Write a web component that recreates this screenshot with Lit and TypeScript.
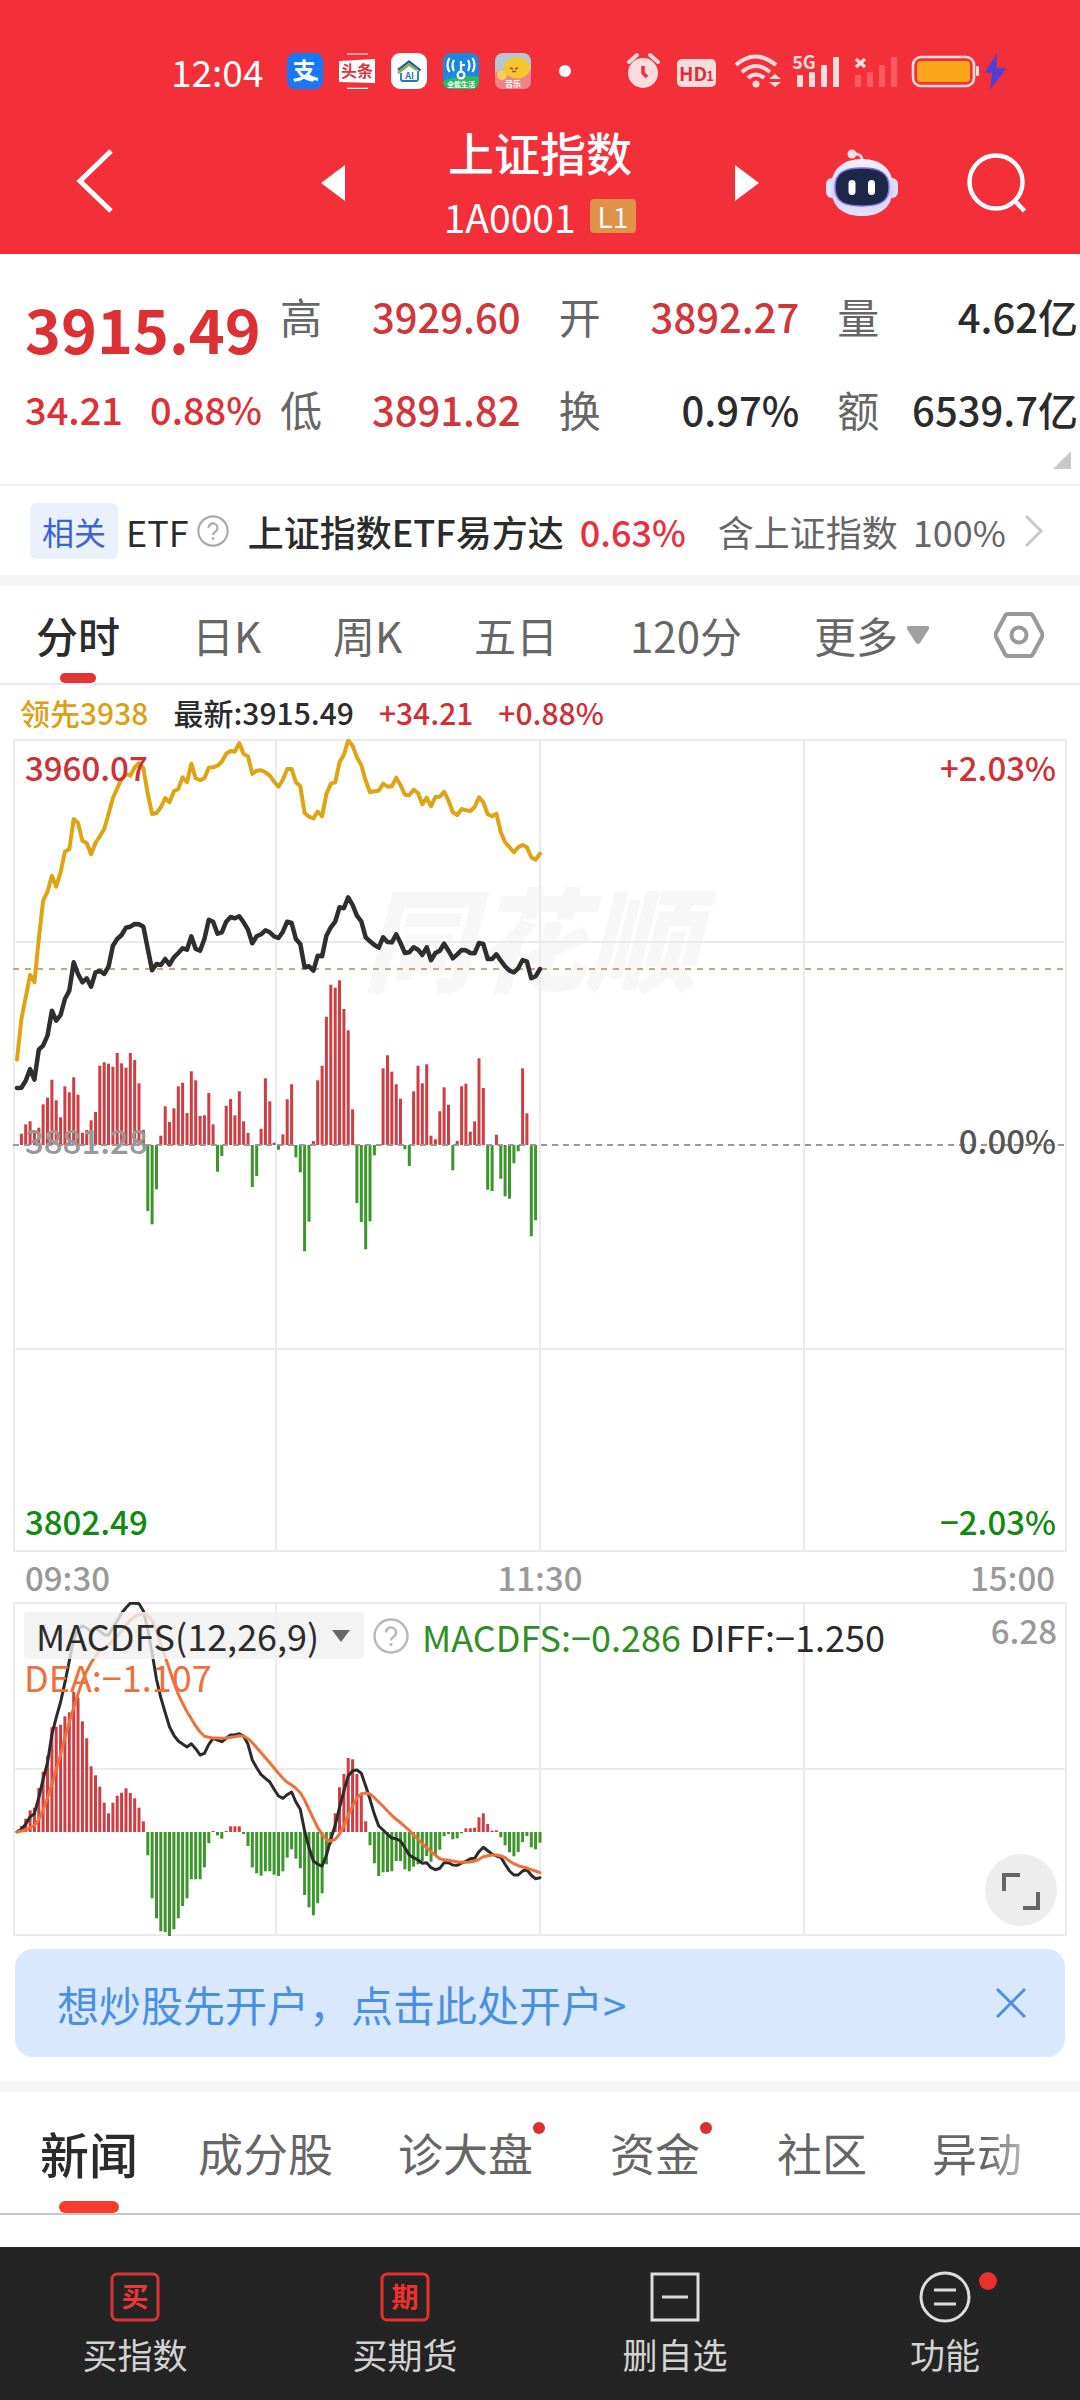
import { LitElement, html, svg, css } from "lit";
import { customElement, state } from "lit/decorators.js";
import { classMap } from "lit/directives/class-map.js";

/* One value per minute of the morning session, 09:30 to 11:30.
   Levels are in thirds of a plot unit, growing downwards. */
const LEAD = [
  1082, 960, 895, 828, 850, 720, 605, 578, 530, 563, 520, 458, 450, 360, 372, 425, 432, 466, 432, 412, 390, 345, 297, 268,
  240, 225, 230, 205, 192, 208, 285, 345, 342, 325, 297, 310, 277, 270, 235, 250, 194, 238, 244, 238, 206, 205, 200, 188,
  164, 156, 158, 132, 165, 172, 225, 215, 214, 220, 230, 248, 263, 242, 210, 210, 250, 262, 342, 353, 358, 338, 352, 285,
  254, 250, 190, 167, 124, 140, 175, 198, 245, 280, 277, 275, 254, 263, 262, 236, 258, 287, 289, 272, 282, 316, 296, 322,
  294, 293, 278, 305, 340, 348, 330, 334, 336, 324, 295, 310, 346, 352, 344, 400, 430, 445, 460, 445, 438, 445, 475, 482,
  464,
];
const PRICE = [
  1167, 1166, 1145, 1110, 1142, 1052, 1040, 1010, 935, 965, 948, 900, 875, 790, 825, 850, 838, 863, 820, 816, 825, 803,
  740, 720, 708, 686, 683, 675, 676, 683, 750, 814, 795, 798, 780, 797, 775, 762, 748, 752, 712, 750, 755, 720, 662, 668,
  704, 700, 668, 654, 658, 652, 670, 692, 733, 712, 706, 694, 700, 712, 717, 698, 668, 672, 720, 735, 805, 802, 815, 770,
  772, 710, 685, 668, 625, 628, 595, 618, 650, 667, 715, 727, 738, 746, 715, 729, 730, 706, 732, 762, 760, 745, 752, 768,
  745, 784, 762, 755, 734, 755, 778, 766, 753, 754, 762, 763, 732, 735, 780, 780, 766, 785, 802, 815, 820, 808, 783, 788,
  838, 832, 810,
];
const FORCE = [
  0, 34, 62, 71, 37, 52, 122, 142, 196, 134, 83, 176, 158, 203, 151, 37, 45, 74, 99, 238, 248, 244, 235, 276, 245, 232,
  276, 255, 185, 45, -198, -238, -133, 28, 116, 69, 110, 176, 187, 96, 221, 194, 87, 89, 156, 62, -80, -33, 118, 138, 89,
  161, 71, 36, -126, -93, 49, 200, 131, 7, -14, 32, 137, 182, -37, -82, -319, -230, 12, 194, 238, 385, 481, 472, 494, 408,
  344, 107, -174, -231, -313, -229, -31, -2, 230, 269, 220, 182, 139, -13, -63, 161, 238, 185, 242, 28, 17, 101, 173, 121,
  -76, 12, 176, 184, 40, 71, 260, 171, -134, -138, 31, -101, -154, -161, -55, -19, 230, 95, -274, -226, 0,
];
const MACD = [
  0, 18, 40, 65, 73, 132, 181, 228, 314, 316, 322, 347, 359, 420, 403, 332, 281, 197, 170, 136, 88, 56, 88, 109, 118, 131,
  117, 101, 73, 32, -70, -199, -259, -298, -300, -312, -292, -259, -222, -199, -142, -142, -142, -106, -33, 3, -10, -20, 3,
  17, 17, 17, -6, -42, -106, -124, -131, -118, -118, -128, -132, -118, -77, -52, -80, -109, -189, -226, -250, -214, -184,
  -97, -37, 56, 134, 174, 222, 218, 174, 113, 32, -40, -94, -132, -121, -120, -118, -87, -87, -112, -118, -104, -97, -87,
  -72, -89, -70, -53, -13, -6, -22, -19, -4, 11, 11, 13, 44, 56, 24, 4, 5, -16, -40, -61, -73, -60, -30, -12, -46, -52,
  -32,
];
const DIFF = [
  1057, 1050, 1035, 1012, 1003, 955, 900, 850, 765, 715, 668, 610, 545, 480, 450, 440, 446, 458, 448, 455, 466, 468, 445,
  425, 402, 385, 372, 372, 373, 395, 450, 520, 600, 655, 700, 742, 768, 785, 794, 803, 793, 808, 827, 822, 795, 777, 782,
  787, 777, 767, 767, 763, 770, 795, 842, 865, 886, 897, 908, 930, 950, 957, 946, 938, 968, 990, 1055, 1105, 1145, 1155,
  1160, 1128, 1080, 1038, 985, 935, 890, 874, 872, 882, 920, 960, 1005, 1040, 1052, 1065, 1076, 1078, 1085, 1105, 1127,
  1135, 1142, 1152, 1150, 1165, 1171, 1167, 1150, 1150, 1157, 1158, 1151, 1146, 1138, 1137, 1117, 1104, 1114, 1124, 1130,
  1134, 1155, 1175, 1187, 1187, 1175, 1171, 1188, 1198, 1195,
];
const DEA = [
  1058, 1055, 1052, 1045, 1038, 1020, 992, 955, 915, 870, 825, 775, 728, 685, 645, 605, 575, 550, 530, 515, 505, 497, 483,
  470, 455, 438, 422, 412, 406, 403, 408, 425, 455, 495, 533, 570, 610, 645, 672, 697, 718, 740, 758, 771, 774, 776, 776,
  777, 776, 774, 772, 769, 770, 778, 790, 805, 820, 835, 850, 866, 882, 897, 909, 917, 927, 940, 962, 990, 1018, 1045,
  1065, 1080, 1085, 1080, 1064, 1038, 1008, 980, 957, 943, 941, 944, 955, 968, 981, 995, 1008, 1020, 1030, 1042, 1053,
  1067, 1080, 1093, 1105, 1117, 1128, 1138, 1141, 1143, 1145, 1147, 1149, 1149, 1148, 1145, 1140, 1132, 1129, 1127, 1127,
  1130, 1135, 1145, 1153, 1159, 1163, 1166, 1171, 1175, 1180,
];

const minuteX = (i: number) => 4 + (i * 523) / 120;
const line = (levels: number[], top: number) =>
  levels.map((v, i) => `${minuteX(i).toFixed(1)},${((v - top) / 3).toFixed(1)}`).join(" ");
const bars = (values: number[], zero: number) =>
  values.map((v, i) =>
    v === 0
      ? null
      : svg`<rect x=${(minuteX(i) - 1.5).toFixed(1)} y=${(v > 0 ? zero - v / 3 : zero).toFixed(1)} width="3"
          height=${(Math.abs(v) / 3).toFixed(1)} fill=${v > 0 ? "#cf3e42" : "#3c962c"}></rect>`
  );

const helpIcon = html`<svg class="help" viewBox="0 0 36 36" aria-hidden="true">
  <circle cx="18" cy="18" r="16.5" fill="none" stroke="currentColor" stroke-width="2.4"></circle>
  <path d="M13 14.5a5 5 0 1 1 7.6 4.2c-1.8 1.1-2.6 1.9-2.6 3.8" fill="none" stroke="currentColor" stroke-width="2.4"></path>
  <circle cx="18" cy="26.5" r="1.6" fill="currentColor"></circle>
</svg>`;

@customElement("status-bar")
class StatusBar extends LitElement {
  static styles = css`
    :host {
      display: flex;
      align-items: center;
      justify-content: space-between;
      height: 118px;
      padding: 24px 74px 0 171px;
      box-sizing: border-box;
      color: #fff;
    }
    .group {
      display: flex;
      align-items: center;
      gap: 16px;
    }
    .time {
      font-size: 37px;
      line-height: 40px;
      margin-right: 8px;
    }
    .app {
      width: 36px;
      height: 36px;
    }
    .dot {
      width: 12px;
      height: 12px;
      border-radius: 50%;
      background: #fff;
      margin-left: 12px;
    }
    .system {
      color: #ffdcdc;
    }
    svg {
      display: block;
      overflow: visible;
    }
    text {
      font-family: "Noto Sans CJK SC", sans-serif;
      font-weight: 700;
      text-anchor: middle;
    }
  `;
  render() {
    return html`
      <div class="group">
        <span class="time">12:04</span>
        <svg class="app" viewBox="0 0 36 36">
          <rect width="36" height="36" rx="8" fill="#1678fb"></rect>
          <text x="17" y="26" font-size="23" fill="#fff">支</text>
          <path d="M20 22c4 3 8 4 11 4.500" stroke="#fff" stroke-width="3" fill="none"></path>
        </svg>
        <svg class="app" viewBox="0 0 36 36">
          <rect width="36" height="36" rx="8" fill="#f0303a"></rect>
          <path d="M8 1h21M8 35.400h21" stroke="#fff" stroke-width="1.200"></path>
          <path d="M0 8l36-2v24L0 29z" fill="#fff"></path>
          <text x="18" y="24" font-size="16" fill="#d9353b">头条</text>
        </svg>
        <svg class="app" viewBox="0 0 36 36">
          <rect width="36" height="36" rx="9" fill="#fff"></rect>
          <path d="M7 17L18 8.500 29.500 17.500" fill="none" stroke="#2a5d9c" stroke-width="2.500"></path>
          <path d="M7 20L18 11.500 26 17" fill="none" stroke="#7fb548" stroke-width="2.500"></path>
          <path d="M10 20v6q0 2 2 2h13q2 0 2-2v-8" fill="none" stroke="#2578b8" stroke-width="1.800"></path>
          <text x="18.500" y="25.500" font-size="9" fill="#2578b8">AI</text>
        </svg>
        <svg class="app" viewBox="0 0 36 36">
          <rect width="36" height="36" rx="8" fill="#1c86e0"></rect>
          <path d="M0 28q18-7 36-4v4q0 8-8 8H8q-8 0-8-8z" fill="#2dba62"></path>
          <g fill="none" stroke="#fff" stroke-width="2.200">
            <path d="M11 7q-3 5 0 11M6.500 5q-4 7 0 14M25 7q3 5 0 11M29.500 5q4 7 0 14M18 8v11M18 12h4"></path>
            <circle cx="18" cy="22" r="3.400"></circle>
          </g>
          <text x="18" y="34" font-size="7" fill="#fff">全能生活</text>
        </svg>
        <svg class="app" viewBox="0 0 36 36">
          <rect width="36" height="36" rx="8" fill="#b9c6cf"></rect>
          <path d="M0 20q10-8 36-2v10q0 8-8 8H8q-8 0-8-8z" fill="#f0828a"></path>
          <circle cx="7" cy="22" r="5" fill="#f2d060"></circle>
          <ellipse cx="22" cy="15" rx="13" ry="10.500" fill="#f6c62b"></ellipse>
          <path d="M15 15l3 1M23 15l-3 1M17 18.500h4" stroke="#b0462c" stroke-width="1.600"></path>
          <text x="18" y="34" font-size="8" fill="#fff">音乐</text>
        </svg>
        <span class="dot"></span>
      </div>
      <svg class="system" width="380" height="36" viewBox="0 0 380 36" role="img" aria-label="系统状态">
        <g fill="currentColor">
          <circle cx="17" cy="20" r="15"></circle>
          <path d="M3 9L11 2M24 2l8 7" stroke="currentColor" stroke-width="4" stroke-linecap="round"></path>
          <path d="M17 13v7l4 4" stroke="#f22f3a" stroke-width="3.500" fill="none"></path>
          <rect x="51" y="6" width="39" height="28" rx="5"></rect>
        </g>
        <text x="67" y="28" font-size="19" fill="#d9303a">HD</text>
        <text x="84" y="28" font-size="13" fill="#d9303a">1</text>
        <g fill="none" stroke="currentColor" stroke-width="4">
          <path d="M110 12q19-17 40 0M116 19q14-12 28 0M122 25q8-7 16 0"></path>
        </g>
        <circle cx="130" cy="31" r="3.500" fill="currentColor"></circle>
        <path d="M143 26l6-5 6 5zM143 29l6 5 6-5z" fill="currentColor"></path>
        <text x="178" y="16" font-size="18" fill="currentColor">5G</text>
        <g fill="currentColor">
          <rect x="171" y="22" width="6" height="12" rx="1"></rect>
          <rect x="183" y="19" width="6" height="15" rx="1"></rect>
          <rect x="195" y="12" width="6" height="22" rx="1"></rect>
          <rect x="207" y="4" width="6" height="30" rx="1"></rect>
        </g>
        <path d="M230 6l9 8M239 6l-9 8" stroke="currentColor" stroke-width="3.500"></path>
        <g fill="#fa5a60">
          <rect x="229" y="22" width="6" height="12" rx="1"></rect>
          <rect x="241" y="19" width="6" height="15" rx="1"></rect>
          <rect x="253" y="12" width="6" height="22" rx="1"></rect>
          <rect x="265" y="4" width="6" height="30" rx="1"></rect>
        </g>
        <rect x="287" y="4" width="61" height="29" rx="8" fill="none" stroke="currentColor" stroke-width="2.600"></rect>
        <rect x="291" y="8" width="53" height="21" rx="4" fill="#fba51a"></rect>
        <rect x="350" y="13" width="3" height="10" rx="1" fill="currentColor"></rect>
        <path d="M370 3l-10 16h7l-2 15 14-18h-9z" fill="#5040d8" stroke="#5040d8" stroke-width="1.500"></path>
      </svg>
    `;
  }
}

@customElement("intraday-chart")
class IntradayChart extends LitElement {
  static styles = css`
    :host {
      display: block;
      padding: 0 13px;
      font-size: 33px;
      line-height: 34px;
      font-weight: 500;
    }
    .legend {
      display: flex;
      gap: 25px;
      padding: 0 7px;
      font-size: 30px;
      line-height: 54px;
      color: #2b2b2b;
    }
    .lead {
      color: #dca014;
    }
    .up {
      color: #cf3036;
    }
    .down {
      color: #118a11;
    }
    .plot {
      display: grid;
      overflow: hidden;
    }
    .plot > * {
      grid-area: 1 / 1;
    }
    .price {
      aspect-ratio: 1054 / 813;
    }
    .macd {
      aspect-ratio: 1054 / 334;
    }
    svg.canvas {
      display: block;
      width: 100%;
      height: 100%;
    }
    .labels {
      display: grid;
      grid-template-columns: auto auto;
      align-content: space-between;
      justify-content: space-between;
      padding: 11px 11px 14px 12px;
      z-index: 1;
    }
    .right {
      text-align: right;
    }
    .muted,
    .axis {
      color: #999;
    }
    .mid {
      color: #555;
    }
    .base {
      padding-bottom: 8px;
    }
    .axis {
      display: grid;
      grid-template-columns: 1fr auto 1fr;
      padding: 0 12px;
      line-height: 50px;
    }
    .readout {
      display: flex;
      flex-wrap: wrap;
      align-content: flex-start;
      align-items: center;
      column-gap: 9px;
      padding: 10px 120px 0 11px;
      color: #2b2b2b;
      font-size: 36px;
      font-weight: 400;
      z-index: 1;
    }
    .picker {
      display: grid;
      align-items: center;
      background: rgba(240, 240, 240, 0.8);
      border-radius: 4px;
      color: #666;
    }
    .picker > * {
      grid-area: 1 / 1;
    }
    .picker .caret {
      justify-self: end;
      margin-right: 13px;
      width: 20px;
      height: 14px;
      pointer-events: none;
    }
    select {
      appearance: none;
      border: 0;
      background: none;
      font: inherit;
      line-height: 47px;
      color: #2b2b2b;
      height: 47px;
      padding: 0 44px 0 12px;
    }
    button {
      border: 0;
      background: none;
      padding: 0;
      font: inherit;
      display: block;
    }
    .help {
      width: 36px;
      height: 36px;
      display: block;
      color: #b8b8b8;
      margin-right: 4px;
    }
    .dfs {
      color: #2f8f25;
    }
    .dea {
      color: #f0703c;
    }
    .side {
      display: flex;
      flex-direction: column;
      justify-content: space-between;
      align-items: flex-end;
      justify-self: end;
      padding: 11px 10px 10px 0;
      z-index: 1;
    }
    .expand {
      width: 72px;
      height: 72px;
      border-radius: 50%;
      background: #ededed;
    }
    .expand svg {
      display: block;
      width: 72px;
      height: 72px;
    }
    .mark {
      font-family: "Noto Sans CJK SC", sans-serif;
      font-weight: 900;
      font-size: 112px;
      font-style: italic;
    }
  `;
  render() {
    return html`
      <div class="legend">
        <span class="lead">领先3938</span><span>最新:3915.49</span><span class="up">+34.21</span
        ><span class="up">+0.88%</span>
      </div>
      <div class="plot price">
        <svg class="canvas" viewBox="0 0 1054 813">
          <text class="mark" x="517" y="244" text-anchor="middle" fill="#f7f7f7">同花顺</text>
          <g fill="none" stroke="#ebebeb" stroke-width="2">
            <rect x="1" y="1" width="1052" height="811"></rect>
            <path d="M263 0v813M527 0v813M791 0v813M0 203h1054M0 610h1054"></path>
          </g>
          ${bars(FORCE, 406)}
          <path d="M0 406h1054" stroke="#999" stroke-width="2" stroke-dasharray="6 5"></path>
          <path d="M0 230h1054" stroke="#bdae78" stroke-width="2" stroke-dasharray="6 6"></path>
          <g fill="none" stroke-linejoin="round" stroke-linecap="round">
            <polyline points=${line(LEAD, 120)} stroke="#dfa414" stroke-width="4"></polyline>
            <polyline points=${line(PRICE, 120)} stroke="#2e2e2e" stroke-width="4.5"></polyline>
          </g>
        </svg>
        <div class="labels">
          <span class="up">3960.07</span><span class="up right">+2.03%</span>
          <span class="muted base">3881.28</span><span class="mid base right">0.00%</span>
          <span class="down">3802.49</span><span class="down right">−2.03%</span>
        </div>
      </div>
      <div class="axis"><span>09:30</span><span>11:30</span><span class="right">15:00</span></div>
      <div class="plot macd">
        <svg class="canvas" viewBox="0 0 1054 334">
          <g fill="none" stroke="#ebebeb" stroke-width="2">
            <rect x="1" y="1" width="1052" height="332"></rect>
            <path d="M263 0v334M527 0v334M791 0v334M0 167h1054"></path>
          </g>
          ${bars(MACD, 230)}
          <g fill="none" stroke-linejoin="round" stroke-linecap="round" stroke-width="3">
            <polyline points=${line(DIFF, 368)} stroke="#2b2b2b"></polyline>
            <polyline points=${line(DEA, 368)} stroke="#f0703c"></polyline>
          </g>
        </svg>
        <div class="readout">
          <span class="picker">
            <select aria-label="指标">
              <option>MACDFS(12,26,9)</option>
            </select>
            <svg class="caret" viewBox="0 0 20 14"><path d="M1 1h18L10 13z" fill="currentColor"></path></svg>
          </span>
          <button aria-label="指标说明">${helpIcon}</button>
          <span class="dfs">MACDFS:−0.286</span>
          <span>DIFF:−1.250</span>
          <span class="dea">DEA:−1.107</span>
        </div>
        <div class="side">
          <span class="muted">6.28</span>
          <button class="expand" aria-label="全屏">
            <svg viewBox="0 0 72 72" fill="none" stroke="#666" stroke-width="4">
              <path d="M19 37V21h16M38 54h15V38"></path>
            </svg>
          </button>
        </div>
      </div>
    `;
  }
}

@customElement("app-root")
class AppRoot extends LitElement {
  @state() private period = "分时";
  @state() private feed = "新闻";

  static styles = css`
    :host {
      display: flex;
      flex-direction: column;
      min-height: 100vh;
      background: #fff;
      color: #2b2b2b;
      font-family: "Noto Sans CJK SC", "Noto Sans", sans-serif;
    }
    button {
      border: 0;
      background: none;
      padding: 0;
      margin: 0;
      font: inherit;
      color: inherit;
      white-space: nowrap;
    }
    a {
      color: inherit;
      text-decoration: none;
    }
    svg {
      display: block;
    }
    .top {
      background: #f32f39;
      color: #fff;
    }
    .titlebar {
      display: grid;
      grid-template-columns: 1fr auto 1fr;
      align-items: center;
      padding: 0 52px 6px;
    }
    .back {
      padding-left: 21px;
    }
    .switcher {
      display: flex;
      align-items: center;
    }
    .name {
      min-width: 390px;
      text-align: center;
    }
    h1 {
      margin: 0;
      font-size: 46px;
      line-height: 66px;
      font-weight: 500;
    }
    .code {
      display: flex;
      align-items: center;
      justify-content: center;
      gap: 14px;
      font-size: 39px;
      line-height: 64px;
    }
    .level {
      background: #e0914a;
      border-radius: 4px;
      font-size: 28px;
      line-height: 34px;
      padding: 0 8px;
    }
    .actions {
      display: flex;
      align-items: center;
      justify-content: flex-end;
      gap: 67px;
    }
    .quote {
      position: relative;
      display: flex;
      padding: 32px 2px 45px 25px;
      border-bottom: 2px solid #f0f0f0;
      font-weight: 500;
    }
    .last {
      flex: none;
      width: 255px;
      color: #dc3034;
    }
    .last strong {
      display: block;
      font-size: 61px;
      line-height: 84px;
      font-weight: 700;
      margin-bottom: 9px;
    }
    .change {
      display: flex;
      gap: 27px;
      font-size: 38px;
      line-height: 60px;
    }
    .stats {
      flex: 1;
      margin: 0;
      display: grid;
      grid-template-columns: repeat(3, 1fr);
      gap: 33px 38px;
      font-size: 40px;
      line-height: 60px;
    }
    .stat {
      display: flex;
      justify-content: space-between;
      white-space: nowrap;
    }
    dt {
      color: #666;
      font-size: 42px;
      font-weight: 400;
    }
    dd {
      margin: 0;
    }
    .rise {
      color: #d2353a;
    }
    .corner {
      position: absolute;
      right: 9px;
      bottom: 15px;
    }
    .etf {
      display: flex;
      align-items: center;
      height: 89px;
      padding: 0 36px 0 30px;
      border-bottom: 11px solid #f5f5f5;
      font-size: 36px;
      line-height: 48px;
      white-space: nowrap;
    }
    .tag {
      background: #eaf0fc;
      color: #3a63d8;
      border-radius: 6px;
      font-size: 32px;
      line-height: 56px;
      padding: 0 12px;
      margin-right: 8px;
    }
    .help {
      width: 32px;
      height: 32px;
      color: #aaa;
      margin: 0 19px 0 8px;
    }
    .fund {
      font-weight: 500;
    }
    .gain {
      color: #e8303e;
      margin: 0 32px 0 16px;
      font-weight: 500;
    }
    .holding {
      color: #666;
      display: flex;
      flex: 1;
      gap: 15px;
    }
    .periods {
      display: flex;
      align-items: center;
      gap: 64px;
      height: 97px;
      padding: 0 36px;
      border-bottom: 2px solid #ebebeb;
      font-size: 42px;
      color: #666;
    }
    .tabs {
      flex: 1;
      align-self: stretch;
      display: flex;
      justify-content: space-between;
    }
    .tab {
      position: relative;
      align-self: stretch;
      display: flex;
      align-items: center;
      gap: 8px;
    }
    .active {
      color: #2b2b2b;
      font-weight: 500;
    }
    .active::after {
      content: "";
      position: absolute;
      left: 50%;
      bottom: 0;
      width: 36px;
      height: 10px;
      margin-left: -18px;
      border-radius: 5px;
      background: #e23434;
    }
    .banner {
      display: flex;
      align-items: center;
      justify-content: space-between;
      margin: 13px 15px 24px;
      height: 108px;
      padding: 0 39px 0 42px;
      border-radius: 18px;
      background: #dae8fe;
      color: #4a8fe0;
      font-size: 42px;
    }
    .feeds {
      display: flex;
      gap: 65px;
      height: 121px;
      padding: 0 50px 0 40px;
      border-top: 11px solid #f5f5f5;
      border-bottom: 2px solid #c8c8c8;
      font-size: 45px;
      color: #666;
      overflow: hidden;
    }
    .feeds .tab {
      flex: none;
    }
    .feeds .active {
      font-size: 49px;
      margin-right: -5px;
    }
    .feeds .active::after {
      width: 60px;
      height: 12px;
      margin-left: -30px;
      border-radius: 6px;
      background: #fb3b2e;
    }
    .fresh {
      margin-right: 12px;
    }
    .fresh::after {
      content: "";
      position: absolute;
      right: -12px;
      top: 30px;
      width: 12px;
      height: 12px;
      border-radius: 50%;
      background: #d93030;
    }
    .feeds .tab:last-child {
      background: linear-gradient(90deg, #666 60%, #b8b8b8);
      background-clip: text;
      -webkit-background-clip: text;
      color: transparent;
    }
    .trade {
      margin-top: auto;
      display: grid;
      grid-template-columns: repeat(4, 1fr);
      background: #242424;
      color: #d2d2d2;
      padding: 25px 0 20px;
      font-size: 35px;
      line-height: 52px;
    }
    .trade button {
      display: flex;
      flex-direction: column;
      align-items: center;
      gap: 6px;
    }
    .trade svg {
      overflow: visible;
    }
    .glyph {
      font-size: 27px;
      font-weight: 700;
      text-anchor: middle;
    }
  `;

  private stat(label: string, value: string, rise = false) {
    return html`<div class="stat">
      <dt>${label}</dt>
      <dd class=${rise ? "rise" : ""}>${value}</dd>
    </div>`;
  }

  render() {
    const fresh = ["诊大盘", "资金"];
    return html`
      <header class="top">
        <status-bar></status-bar>
        <div class="titlebar">
          <div class="back">
            <button aria-label="返回">
              <svg width="44" height="66" viewBox="0 0 44 66" fill="none" stroke="#fff" stroke-width="5">
                <path d="M38 3L7 33l31 30"></path>
              </svg>
            </button>
          </div>
          <div class="switcher">
            <button aria-label="上一个"><svg width="24" height="36"><path d="M24 0v36L0 18z" fill="#fff"></path></svg></button>
            <div class="name">
              <h1>上证指数</h1>
              <div class="code"><span>1A0001</span><span class="level">L1</span></div>
            </div>
            <button aria-label="下一个"><svg width="24" height="36"><path d="M0 0v36L24 18z" fill="#fff"></path></svg></button>
          </div>
          <div class="actions">
            <button aria-label="智能助手">
              <svg width="74" height="68" viewBox="0 0 74 68">
                <defs>
                  <linearGradient id="shell" x1="0" y1="0" x2="0" y2="1">
                    <stop offset="0" stop-color="#f6f2fb"></stop>
                    <stop offset=".6" stop-color="#d4cff6"></stop>
                    <stop offset="1" stop-color="#e6e2fb"></stop>
                  </linearGradient>
                </defs>
                <path d="M28 5q10-1 9 8" fill="none" stroke="#f3d7e2" stroke-width="3"></path>
                <circle cx="27" cy="5" r="4.500" fill="#fbdde4"></circle>
                <rect x="1" y="29" width="12" height="20" rx="6" fill="#e6e2f8"></rect>
                <rect x="61" y="29" width="12" height="20" rx="6" fill="#dcdcf6"></rect>
                <path d="M37 10c20 0 31 11 31 28 0 19-11 29-31 29S6 57 6 38C6 21 17 10 37 10z" fill="url(#shell)"></path>
                <path
                  d="M37 19c18 0 27 5 27 19 0 14-8 19-27 19s-27-5-27-19c0-14 9-19 27-19z"
                  fill="#1d2748"
                  stroke="#7c6fe0"
                  stroke-width="1.500"
                ></path>
                <rect x="23.500" y="31" width="7" height="15" rx="3.500" fill="#fff"></rect>
                <rect x="43" y="31" width="7" height="15" rx="3.500" fill="#fff"></rect>
              </svg>
            </button>
            <button aria-label="搜索">
              <svg width="62" height="62" viewBox="0 0 62 62" fill="none" stroke="#fff" stroke-width="4.500">
                <circle cx="30" cy="30" r="26.500"></circle>
                <path d="M48.500 48.500L58.500 59"></path>
              </svg>
            </button>
          </div>
        </div>
      </header>

      <section class="quote">
        <div class="last">
          <strong>3915.49</strong>
          <div class="change"><span>34.21</span><span>0.88%</span></div>
        </div>
        <dl class="stats">
          ${this.stat("高", "3929.60", true)} ${this.stat("开", "3892.27", true)} ${this.stat("量", "4.62亿")}
          ${this.stat("低", "3891.82", true)} ${this.stat("换", "0.97%")} ${this.stat("额", "6539.7亿")}
        </dl>
        <svg class="corner" width="18" height="18"><path d="M18 0v18H0z" fill="#c8c8c8"></path></svg>
      </section>

      <a class="etf" href="#etf">
        <span class="tag">相关</span>
        <span>ETF</span>
        ${helpIcon}
        <span class="fund">上证指数ETF易方达</span>
        <span class="gain">0.63%</span>
        <span class="holding"><span>含上证指数</span><span>100%</span></span>
        <svg width="20" height="34" viewBox="0 0 20 34" fill="none" stroke="#c8c8c8" stroke-width="3">
          <path d="M2 2l15 15L2 32"></path>
        </svg>
      </a>

      <nav class="periods">
        <div class="tabs">
          ${["分时", "日K", "周K", "五日", "120分"].map(
            (p) => html`<button
              class=${classMap({ tab: true, active: p === this.period })}
              @click=${() => (this.period = p)}
            >
              ${p}
            </button>`
          )}
          <button class="tab" aria-haspopup="menu">
            更多<svg width="24" height="20"><path d="M2 1h20q2 1 1 3L14 18q-2 2-4 0L1 4Q0 2 2 1z" fill="#a0a0a0"></path></svg>
          </button>
        </div>
        <button aria-label="设置">
          <svg width="50" height="48" viewBox="0 0 50 48" fill="none" stroke="#999" stroke-width="4" stroke-linejoin="round">
            <path d="M14 3h22q2 0 3 2l9 17q1 2 0 4l-9 17q-1 2-3 2H14q-2 0-3-2L2 26q-1-2 0-4l9-17q1-2 3-2z"></path>
            <circle cx="25" cy="24" r="7.500"></circle>
          </svg>
        </button>
      </nav>

      <intraday-chart></intraday-chart>

      <div class="banner">
        <a href="#open">想炒股先开户，点击此处开户&gt;</a>
        <button aria-label="关闭">
          <svg width="30" height="30" viewBox="0 0 30 30" stroke="currentColor" stroke-width="3">
            <path d="M1 1l28 28M29 1L1 29"></path>
          </svg>
        </button>
      </div>

      <nav class="feeds">
        ${["新闻", "成分股", "诊大盘", "资金", "社区", "异动"].map(
          (f) => html`<button
            class=${classMap({ tab: true, active: f === this.feed, fresh: fresh.includes(f) })}
            @click=${() => (this.feed = f)}
          >
            ${f}
          </button>`
        )}
      </nav>

      <nav class="trade">
        <button>
          <svg width="50" height="50" viewBox="0 0 50 50">
            <rect x="2" y="2" width="46" height="46" rx="5" fill="none" stroke="#d9343a" stroke-width="3"></rect>
            <text class="glyph" x="25" y="35" fill="#e8383c">买</text>
          </svg>
          买指数
        </button>
        <button>
          <svg width="50" height="50" viewBox="0 0 50 50">
            <rect x="2" y="2" width="46" height="46" rx="5" fill="none" stroke="#e8302f" stroke-width="3"></rect>
            <text class="glyph" x="25" y="35" fill="#f0302f">期</text>
          </svg>
          买期货
        </button>
        <button>
          <svg width="50" height="50" viewBox="0 0 50 50" fill="none" stroke="#dcdcdc" stroke-width="3">
            <path d="M2 2h46v46H2zM12 25h26"></path>
          </svg>
          删自选
        </button>
        <button>
          <svg width="50" height="50" viewBox="0 0 50 50" fill="none" stroke="#dcdcdc" stroke-width="3">
            <circle cx="25" cy="25" r="24"></circle>
            <path d="M14 18h22M14 32h22"></path>
            <circle cx="68" cy="9" r="9" fill="#e8302f" stroke="none"></circle>
          </svg>
          功能
        </button>
      </nav>
    `;
  }
}
